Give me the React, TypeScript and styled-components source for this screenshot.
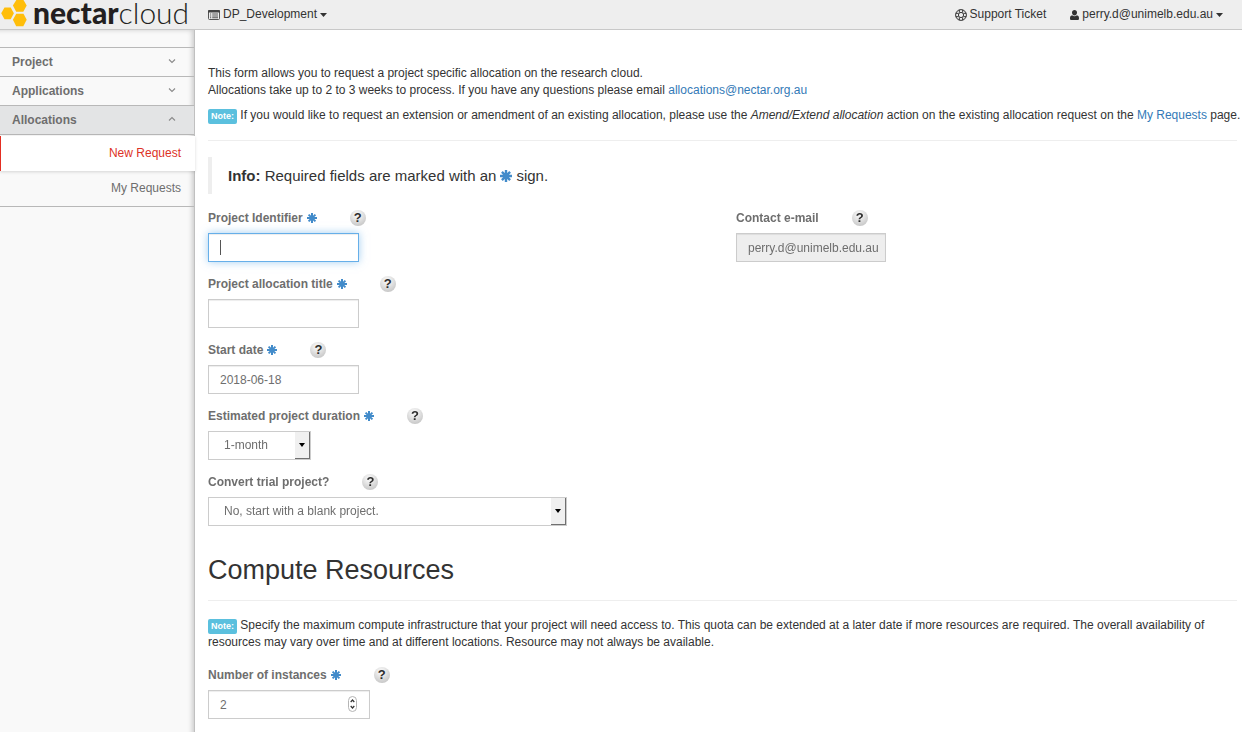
import React from "react";
import styled, { createGlobalStyle, css } from "styled-components";

const GlobalStyle = createGlobalStyle`
  *, *::before, *::after { box-sizing: border-box; }
  body {
    margin: 0;
    background: #fff;
    color: #333;
    font: 12px/17px "Liberation Sans", Arial, Helvetica, sans-serif;
  }
  #root { display: flex; min-height: 100vh; flex-direction: column; }
`;

const TopBar = styled.header`
  display: flex;
  align-items: center;
  height: 30px;
  padding-right: 19px;
  background: #eee;
  border-bottom: 1px solid #c8c8c8;
`;

const Brand = styled.a`
  display: flex;
  align-items: center;
  width: 208px;
  height: 29px;
  color: #231f20;
  text-decoration: none;
`;

const BrandName = styled.span`
  margin-left: 6px;
  padding-bottom: 6px;
  font: 300 30px/30px Lato, sans-serif;
  white-space: nowrap;
  b { font-weight: 900; }
`;

const BarButton = styled.button`
  display: flex;
  align-items: center;
  gap: 3px;
  padding: 0;
  border: 0;
  background: none;
  color: #333;
  font: inherit;
`;

const BarLink = styled.a`
  display: flex;
  align-items: center;
  gap: 3px;
  color: #333;
  text-decoration: none;
`;

const BarRight = styled.div`
  display: flex;
  gap: 24px;
  margin-left: auto;
`;

const Body = styled.div`
  display: flex;
  flex: 1;
`;

const Sidebar = styled.nav`
  flex: none;
  width: 195px;
  padding-top: 17px;
  background: #f9f9f9;
  border-right: 1px solid #c0c0c0;
  box-shadow: inset -4px 2px 5px -2px rgba(0, 0, 0, 0.18);
`;

const PanelButton = styled.button<{ $open?: boolean }>`
  display: flex;
  align-items: center;
  justify-content: space-between;
  width: 100%;
  height: 29px;
  padding: 1px 18px 0 12px;
  border: 0;
  border-top: 1px solid #b8b8b8;
  background: ${(p) => (p.$open ? "#e3e4e5" : "transparent")};
  color: #6e6e6e;
  font: inherit;
  font-weight: bold;
  svg { margin-bottom: 4px; }
`;

const SubList = styled.ul`
  margin: 0;
  padding: 1px 0 0;
  list-style: none;
  border-top: 1px solid #b8b8b8;
  border-bottom: 1px solid #b8b8b8;
`;

const SubLink = styled.a<{ $current?: boolean }>`
  display: block;
  padding: 9px 13px;
  color: #6e6e6e;
  text-align: right;
  text-decoration: none;
  ${(p) =>
    p.$current &&
    css`
      margin-right: -1px;
      padding-right: 14px;
      padding-left: 12px;
      border-left: 1px solid #e32e22;
      background: #fff;
      color: #dd3226;
      box-shadow: 0 1px 3px rgba(0, 0, 0, 0.15);
    `}
`;

const Main = styled.main`
  flex: 1;
  min-width: 0;
  padding: 35px 5px 12px 13px;
`;

const Text = styled.p<{ $bleed?: boolean }>`
  margin: 0 ${(p) => (p.$bleed ? "-5px" : "0")} 8px 0;
`;

const Link = styled.a`
  color: #337ab7;
  text-decoration: none;
`;

const NoteTag = styled.span`
  display: inline-block;
  padding: 0 3px;
  border-radius: 2px;
  background: #5bc0de;
  color: #fff;
  font-size: 9px;
  font-weight: bold;
  line-height: 15px;
`;

const Rule = styled.hr`
  margin: 16px 0;
  border: 0;
  border-top: 1px solid #eee;
`;

const InfoQuote = styled.blockquote`
  display: flex;
  align-items: center;
  gap: 4px;
  height: 37px;
  margin: 0 0 16px;
  padding: 0 16px;
  border-left: 4px solid #eee;
  font-size: 15px;
`;

const Columns = styled.div`
  display: grid;
  grid-template-columns: 1fr 1fr;
  gap: 27px;
`;

const Field = styled.div`
  margin-bottom: 14px;
`;

const LabelRow = styled.div`
  display: flex;
  align-items: center;
  gap: 33px;
  height: 16px;
  margin-bottom: 7px;
`;

const Label = styled.label`
  display: flex;
  align-items: center;
  gap: 4px;
  color: #6e6e6e;
  font-weight: bold;
`;

const HelpButton = styled.button`
  width: 16px;
  height: 16px;
  padding: 0;
  border: 0;
  border-radius: 50%;
  background: radial-gradient(circle at 45% 30%, #f0f0f0 20%, #b9b9b9 100%);
  color: #2d2d2d;
  font: bold 13px/16px "Liberation Sans", Arial, sans-serif;
  text-align: center;
`;

const control = css`
  display: block;
  height: 29px;
  border: 1px solid #ccc;
  border-radius: 0;
  background-color: #fff;
  color: #6e6e6e;
  font: inherit;
  outline: none;
`;

const TextInput = styled.input<{ $wide?: boolean; $focused?: boolean }>`
  ${control}
  width: ${(p) => (p.$wide ? 162 : 151)}px;
  padding: 0 4px 0 11px;
  box-shadow: inset 0 1px 1px rgba(0, 0, 0, 0.075);
  appearance: textfield;
  &::-webkit-inner-spin-button { appearance: none; margin: 0; }
  &:disabled { width: 150px; background-color: #eee; }
  ${(p) =>
    p.$focused &&
    css`
      border-color: #66afe9;
      background-image: linear-gradient(#555, #555);
      background-position: 11px 6px;
      background-repeat: no-repeat;
      background-size: 1px 15px;
      caret-color: transparent;
      box-shadow: inset 0 1px 1px rgba(0, 0, 0, 0.075), 0 0 8px rgba(102, 175, 233, 0.6);
    `}
`;

const SelectShell = styled.div<{ $wide?: boolean }>`
  position: relative;
  width: ${(p) => (p.$wide ? 359 : 103)}px;
`;

const Select = styled.select`
  ${control}
  width: 100%;
  padding: 0 30px 0 15px;
  appearance: none;
`;

const SelectArrow = styled.span`
  position: absolute;
  top: 1px;
  right: 1px;
  bottom: 1px;
  display: flex;
  align-items: center;
  justify-content: center;
  width: 15px;
  border-right: 1px solid #707070;
  border-bottom: 1px solid #707070;
  background: #f0f0f0;
  pointer-events: none;
`;

const NumberShell = styled.div`
  position: relative;
  width: 162px;
`;

const Stepper = styled.svg`
  position: absolute;
  top: 6px;
  right: 13px;
  pointer-events: none;
`;

const Heading = styled.h1`
  margin: 16px 0 0;
  font-size: 27px;
  font-weight: normal;
  line-height: 28px;
`;

const Section = styled.section`
  padding-top: 8px;
`;

const Logo = () => (
  <svg width="27" height="29" viewBox="0 0 27 29" fill="#ffbe0a" aria-hidden="true">
    <path d="M4.500 7.500h6.200l3.200 5.800-3.200 5.900H4.500L1.200 13.300z" />
    <path d="M16.300 0h7.200l3.200 5.600-3.400 6.200h-7.100L12.900 5.600z" />
    <path d="M16.300 13.700h7.200l3.200 6-3.400 6.500h-7.100L12.900 19.800z" />
  </svg>
);

const Asterisk = ({ size = 10 }: { size?: number }) => (
  <svg width={size} height={size} viewBox="0 0 12 12" stroke="#428bca" strokeWidth="2.400" aria-label="required">
    <path d="M6 0v12M0 6h12M1.900 1.900l8.200 8.200M10.100 1.900L1.900 10.100" />
  </svg>
);

const Caret = ({ color = "#333", width = 7 }: { color?: string; width?: number }) => (
  <svg width={width} height="4" viewBox="0 0 8 4" preserveAspectRatio="none" fill={color} aria-hidden="true">
    <path d="M0 0h8L4 4z" />
  </svg>
);

const Chevron = ({ up }: { up?: boolean }) => (
  <svg width="8" height="6" viewBox="0 0 8 6" fill="none" stroke="#8a8a8a" strokeWidth="1.100" aria-hidden="true">
    <path d={up ? "M1 4.500L4 1.500l3 3" : "M1 1.500l3 3 3-3"} />
  </svg>
);

const ListIcon = () => (
  <svg width="12" height="10" viewBox="0 0 12 10" aria-hidden="true">
    <rect x=".5" y=".5" width="11" height="9" rx="1" fill="#eee" stroke="#555" />
    <path d="M1 0h10q1 0 1 1v1.600H0V1q0-1 1-1z" fill="#444" />
    <path d="M2 3.600h1.200v1H2zM4.200 3.600H10v1H4.200zM2 5.400h1.200v1H2zM4.200 5.400H10v1H4.200zM2 7.200h1.200v1H2zM4.200 7.200H10v1H4.200z" fill="#555" />
  </svg>
);

const RingIcon = () => (
  <svg width="12" height="12" viewBox="0 0 12 12" fill="none" stroke="#333" aria-hidden="true">
    <circle cx="6" cy="6" r="5.400" />
    <circle cx="6" cy="6" r="2.600" />
    <path d="M4.300 .9v2.600M7.700 .9v2.600M4.300 8.500v2.600M7.700 8.500v2.600M.9 4.300h2.600M.9 7.700h2.600M8.500 4.300h2.600M8.500 7.700h2.600" />
  </svg>
);

const UserIcon = () => (
  <svg width="9" height="10" viewBox="0 0 9 10" fill="#333" aria-hidden="true">
    <path d="M4.500 0C6 0 7 1 7 2.600 7 4 6.200 5.500 4.500 5.500S2 4 2 2.600C2 1 3 0 4.500 0z" />
    <path d="M2.100 5.200C2.800 6 3.600 6.300 4.500 6.300S6.200 6 6.900 5.200C8.500 5.500 9 6.800 9 8.400 9 9.400 8.400 10 7.500 10h-6C.6 10 0 9.400 0 8.400 0 6.800.5 5.500 2.100 5.200z" />
  </svg>
);

type FormFieldProps = {
  id: string;
  label: string;
  required?: boolean;
  children: React.ReactNode;
};

const FormField = ({ id, label, required, children }: FormFieldProps) => (
  <Field>
    <LabelRow>
      <Label htmlFor={id}>
        {label}
        {required && <Asterisk />}
      </Label>
      <HelpButton type="button" aria-label={`Help: ${label}`}>?</HelpButton>
    </LabelRow>
    {children}
  </Field>
);

export default function App() {
  return (
    <>
      <GlobalStyle />
      <TopBar>
        <Brand href="#">
          <Logo />
          <BrandName><b>nectar</b>cloud</BrandName>
        </Brand>
        <BarButton type="button"><ListIcon />DP_Development<Caret /></BarButton>
        <BarRight>
          <BarLink href="#"><RingIcon />Support Ticket</BarLink>
          <BarButton type="button"><UserIcon />perry.d@unimelb.edu.au<Caret /></BarButton>
        </BarRight>
      </TopBar>
      <Body>
        <Sidebar>
          <PanelButton type="button">Project<Chevron /></PanelButton>
          <PanelButton type="button">Applications<Chevron /></PanelButton>
          <PanelButton type="button" $open>Allocations<Chevron up /></PanelButton>
          <SubList>
            <li><SubLink href="#" $current>New Request</SubLink></li>
            <li><SubLink href="#">My Requests</SubLink></li>
          </SubList>
        </Sidebar>
        <Main>
          <Text>
            This form allows you to request a project specific allocation on the research cloud.<br />
            Allocations take up to 2 to 3 weeks to process. If you have any questions please email{" "}
            <Link href="#">allocations@nectar.org.au</Link>
          </Text>
          <Text $bleed>
            <NoteTag>Note:</NoteTag> If you would like to request an extension or amendment of an existing
            allocation, please use the <em>Amend/Extend allocation</em> action on the existing allocation
            request on the <Link href="#">My Requests</Link> page.
          </Text>
          <Rule />
          <InfoQuote>
            <span><b>Info:</b> Required fields are marked with an</span>
            <Asterisk size={12} />
            <span>sign.</span>
          </InfoQuote>
          <Columns>
            <div>
              <FormField id="identifier" label="Project Identifier" required>
                <TextInput id="identifier" type="text" autoFocus $focused />
              </FormField>
              <FormField id="title" label="Project allocation title" required>
                <TextInput id="title" type="text" />
              </FormField>
              <FormField id="start" label="Start date" required>
                <TextInput id="start" type="text" defaultValue="2018-06-18" />
              </FormField>
              <FormField id="duration" label="Estimated project duration" required>
                <SelectShell>
                  <Select id="duration"><option>1-month</option></Select>
                  <SelectArrow><Caret color="#000" width={6} /></SelectArrow>
                </SelectShell>
              </FormField>
              <FormField id="convert" label="Convert trial project?">
                <SelectShell $wide>
                  <Select id="convert"><option>No, start with a blank project.</option></Select>
                  <SelectArrow><Caret color="#000" width={6} /></SelectArrow>
                </SelectShell>
              </FormField>
            </div>
            <div>
              <FormField id="email" label="Contact e-mail">
                <TextInput id="email" type="email" defaultValue="perry.d@unimelb.edu.au" disabled />
              </FormField>
            </div>
          </Columns>
          <Heading>Compute Resources</Heading>
          <Rule />
          <Text>
            <NoteTag>Note:</NoteTag> Specify the maximum compute infrastructure that your project will need
            access to. This quota can be extended at a later date if more resources are required. The overall
            availability of resources may vary over time and at different locations. Resource may not always
            be available.
          </Text>
          <Section>
            <FormField id="instances" label="Number of instances" required>
              <NumberShell>
                <TextInput id="instances" type="number" defaultValue={2} $wide />
                <Stepper width="9" height="16" viewBox="0 0 9 16" fill="#fff" stroke="#b5b5b5" aria-hidden="true">
                  <rect x=".5" y=".5" width="8" height="15" rx="4" />
                  <path d="M2.700 6l1.800-2 1.800 2M2.700 10l1.800 2 1.800-2" fill="none" stroke="#333" strokeWidth="1.200" />
                </Stepper>
              </NumberShell>
            </FormField>
          </Section>
        </Main>
      </Body>
    </>
  );
}
